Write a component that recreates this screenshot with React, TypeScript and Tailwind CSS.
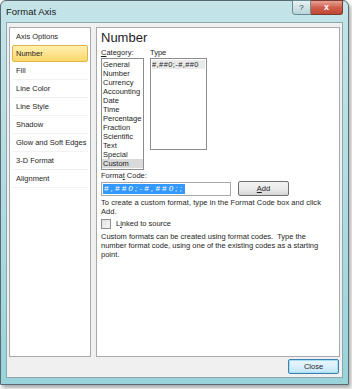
import React from "react";

const cats = ["General","Number","Currency","Accounting","Date","Time","Percentage","Fraction","Scientific","Text","Special","Custom"];
const nav = ["Axis Options","Number","Fill","Line Color","Line Style","Shadow","Glow and Soft Edges","3-D Format","Alignment"];

export default function App() {
  return (
    <div className="w-[352px] h-[389px] bg-white relative overflow-hidden" style={{ fontFamily: '"Liberation Sans", Arial, sans-serif' }}>
      <div className="absolute left-0 top-0 w-[349px] h-[385px] rounded-t-[6px] border border-[#5a6a70] bg-gradient-to-b from-[#c4e4e8] via-[#b0dce1] to-[#98d4da] shadow-[2px_3px_4px_rgba(0,0,0,0.35)] flex flex-col">
        {/* title bar */}
        <div className="h-[21px] flex items-start relative">
          <span className="text-[9.5px] text-[#1a1a1a] ml-[5px] mt-[4px]">Format Axis</span>
          <div className="absolute right-[5px] top-[-1px] flex">
            <div className="w-[19px] h-[15px] border border-[#6b8a90] rounded-bl-[3px] bg-gradient-to-b from-[#e8f2f4] to-[#b9d3d8] flex items-center justify-center text-[8px] text-[#2a3b40]">?</div>
            <div className="w-[32px] h-[15px] border border-[#7a3a30] border-l-0 rounded-br-[3px] bg-gradient-to-b from-[#e8a296] via-[#d0604e] to-[#c04530] flex items-center justify-center text-[9px] font-bold text-white">x</div>
          </div>
        </div>
        {/* client area */}
        <div className="flex-1 mx-[5px] mb-[6px] border border-[#8aa8ae] bg-[#f0f0f0] flex flex-col px-[2px] pt-[4px]">
          <div className="flex gap-[5px] h-[330px]">
            {/* nav */}
            <div className="w-[82px] h-full bg-white border border-[#a9a9a9] px-[2px] pt-0 flex flex-col text-[7.5px] text-[#1e1e1e]">
              {nav.map((n, i) => (
                <div key={n} className={i === 1
                  ? "h-[17px] flex items-center pl-[3px] border border-[#e2b54a] rounded-[2px] bg-gradient-to-b from-[#fff0b0] to-[#fbd769]"
                  : i === 0 ? "h-[17px] flex items-center pl-[4px]" : "h-[18px] flex items-center pl-[4px] border-b border-[#f2f2f2]"}>
                  {n}
                </div>
              ))}
            </div>
            {/* content */}
            <div className="flex-1 h-full bg-white border border-[#a9a9a9] pl-[4px] pt-[2px] text-[7.5px] text-[#1e1e1e]">
              <div className="text-[13px] leading-[16px] text-[#1e1e1e]">Number</div>
              <div className="flex gap-[6px] mt-[2px]">
                <div className="flex flex-col">
                  <div className="h-[9px] leading-[9px]"><span className="underline">C</span>ategory:</div>
                  <div className="w-[43px] h-[112px] border border-[#8d8d8d] mt-[1px] pt-[1px] flex flex-col">
                    {cats.map((c) => (
                      <div key={c} className={c === "Custom" ? "h-[9px] leading-[9px] pl-[1px] bg-[#d9d9d9]" : "h-[9px] leading-[9px] pl-[1px]"}>{c}</div>
                    ))}
                  </div>
                </div>
                <div className="flex flex-col">
                  <div className="h-[9px] leading-[9px]">Type</div>
                  <div className="w-[57px] h-[92px] border border-[#8d8d8d] mt-[1px] pt-[1px] px-[1px]">
                    <div className="h-[9px] leading-[9px] bg-[#eaeaea] whitespace-nowrap overflow-hidden text-[7.5px] tracking-[0.4px]">#,##0;-#,##0</div>
                  </div>
                </div>
              </div>
              <div className="mt-[1px] h-[10px] leading-[10px]">Forma<span className="underline">t</span> Code:</div>
              <div className="flex items-center gap-[7px]">
                <div className="w-[130px] h-[14px] border border-[#a8a8a8] bg-white flex items-center px-[1px]">
                  <span className="bg-[#3399ff] text-white text-[8px] italic tracking-[2.2px] leading-[10px] px-[1px]">#,##0;-#,##0;;</span>
                </div>
                <div className="w-[51px] h-[15px] border border-[#707070] rounded-[2px] bg-gradient-to-b from-[#f2f2f2] via-[#ebebeb] to-[#d5d5d5] flex items-center justify-center"><span className="underline">A</span>dd</div>
              </div>
              <div className="mt-[2px] leading-[9px] w-[228px] tracking-[0.05px]">To create a custom format, type in the Format Code box and click Add.</div>
              <div className="flex items-center gap-[5px] mt-[2px]">
                <div className="w-[10px] h-[10px] border border-[#8e8f8f] bg-gradient-to-br from-[#e0e0e0] to-[#f6f6f6]" />
                <span>L<span className="underline">i</span>nked to source</span>
              </div>
              <div className="mt-[3px] leading-[9px] w-[228px]">Custom formats can be created using format codes.&nbsp; Type the number format code, using one of the existing codes as a starting point.</div>
            </div>
          </div>
          <div className="flex justify-end mt-[2px] pr-[1px]">
            <div className="w-[51px] h-[15px] border border-[#3c7fb1] rounded-[2px] bg-gradient-to-b from-[#eaf6fd] via-[#d9f0fc] to-[#bee6fd] shadow-[inset_0_0_0_1px_#a6dff5] flex items-center justify-center text-[7.5px] text-[#1e1e1e]">Close</div>
          </div>
        </div>
      </div>
    </div>
  );
}
